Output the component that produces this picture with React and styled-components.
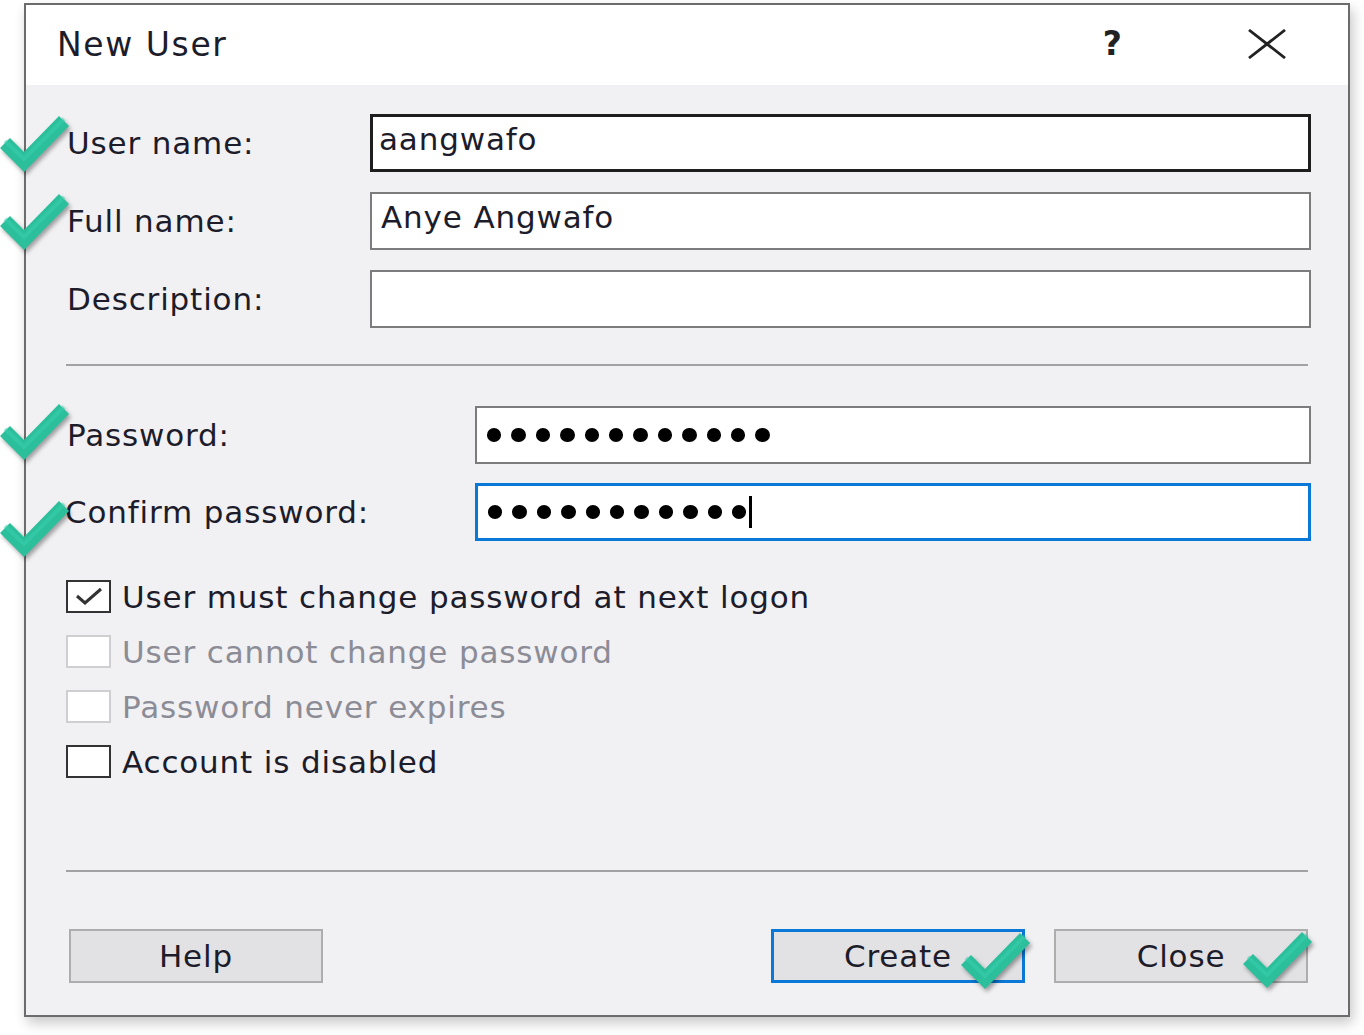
import React from "react";
import styled, { createGlobalStyle } from "styled-components";

const GlobalStyle = createGlobalStyle`
  html, body { margin: 0; padding: 0; background: #ffffff; }
  body { font-family: "DejaVu Sans", "Liberation Sans", sans-serif; }
  * { box-sizing: border-box; }
`;

const Page = styled.div`
  width: 1364px;
  height: 1035px;
  padding: 3px 0 0 24px;
  overflow: hidden;
`;

const Dialog = styled.div`
  position: relative;
  width: 1326px;
  border: 2px solid #6c6c6c;
  background: #f1f0f3;
  box-shadow: 3px 6px 12px rgba(0, 0, 0, 0.22);
  display: flex;
  flex-direction: column;
`;

const TitleBar = styled.div`
  height: 80px;
  background: #ffffff;
  display: flex;
  align-items: center;
  padding: 0 62px 0 31px;
`;

const Title = styled.div`
  flex: 1;
  font-size: 33px;
  letter-spacing: 1.6px;
  color: #1c1c2a;
  margin-top: -2px;
`;

const TitleButtons = styled.div`
  display: flex;
  align-items: center;
  gap: 126px;
  margin-top: -3px;
`;

const HelpGlyph = styled.span`
  font-size: 33px;
  font-weight: bold;
  color: #222;
  line-height: 1;
`;

const Body = styled.div`
  display: flex;
  flex-direction: column;
  padding: 29px 37px 32px 41px;
  font-size: 31px;
  letter-spacing: 0.85px;
  color: #1c1c2a;
`;

const FieldGroup = styled.div`
  display: flex;
  flex-direction: column;
  gap: ${(p) => p.$gap}px;
`;

const Row = styled.div`
  position: relative;
  display: flex;
  align-items: center;
  height: 58px;
`;

const Label = styled.div`
  width: ${(p) => p.$width}px;
  flex-shrink: 0;
  white-space: nowrap;
  margin-left: ${(p) => p.$shift || 0}px;
`;

const Input = styled.div`
  flex: 1;
  height: 58px;
  background: #ffffff;
  border: ${(p) => (p.$state === "active" ? "3px solid #1e1e1e" : p.$state === "focus" ? "3px solid #0a78d6" : "2px solid #7c7c7c")};
  display: flex;
  align-items: center;
  padding: 0 0 8px ${(p) => (p.$state === "active" ? 6 : 9)}px;
  white-space: nowrap;
`;

const DotInput = styled(Input)`
  padding: 0 0 0 10px;
  gap: 10px;
`;

const Dot = styled.span`
  width: 14.4px;
  height: 14px;
  border-radius: 50%;
  background: #000;
  flex-shrink: 0;
`;

const Caret = styled.span`
  width: 3px;
  height: 32px;
  background: #000;
  margin-left: -7px;
`;

const Separator = styled.div`
  height: 2px;
  background: #a2a2a2;
  margin: ${(p) => p.$top}px 3px ${(p) => p.$bottom}px -1px;
`;

const CheckList = styled.div`
  display: flex;
  flex-direction: column;
  margin-top: 28px;
`;

const CheckRow = styled.div`
  height: 55px;
  display: flex;
  align-items: center;
  gap: 11px;
  margin-left: -1px;
  color: ${(p) => (p.$disabled ? "#8c8c96" : "#1c1c2a")};
`;

const Box = styled.span`
  width: 45px;
  height: 33px;
  background: #ffffff;
  border: 2px solid ${(p) => (p.$disabled ? "#cfcfd2" : "#333333")};
  display: flex;
  align-items: center;
  justify-content: center;
  flex-shrink: 0;
`;

const ButtonBar = styled.div`
  display: flex;
  align-items: center;
  margin-left: 2px;
  margin-right: 3px;
`;

const Spacer = styled.div`
  flex: 1;
`;

const Button = styled.div`
  position: relative;
  width: 254px;
  height: 54px;
  background: #e2e1e4;
  border: ${(p) => (p.$primary ? "3px solid #0a78d6" : "2px solid #adadad")};
  display: flex;
  align-items: center;
  justify-content: center;
  margin-left: ${(p) => p.$ml || 0}px;
  color: #1c1c2a;
`;

const Mark = styled.svg`
  position: absolute;
  left: ${(p) => p.$left}px;
  top: ${(p) => p.$top}px;
  width: 74px;
  height: 62px;
  filter: drop-shadow(2px 3px 2px rgba(0, 0, 0, 0.35));
  pointer-events: none;
`;

function GreenCheck({ left, top }) {
  return (
    <Mark $left={left} $top={top} viewBox="0 0 74 62">
      <polyline
        points="6,31 25,50 65,9"
        fill="none"
        stroke="#2bbf9c"
        strokeWidth="14"
        strokeLinejoin="miter"
        strokeLinecap="butt"
      />
      <polyline
        points="6,29 25,47 65,7"
        fill="none"
        stroke="#3bd1ad"
        strokeWidth="4"
        strokeLinejoin="miter"
        opacity="0.5"
      />
    </Mark>
  );
}

function Dots({ n }) {
  return Array.from({ length: n }).map((_, i) => <Dot key={i} />);
}

export default function App() {
  return (
    <>
      <GlobalStyle />
      <Page>
        <Dialog>
          <TitleBar>
            <Title>New User</Title>
            <TitleButtons>
              <HelpGlyph>?</HelpGlyph>
              <svg width="38" height="30" viewBox="0 0 38 30">
                <path d="M1 1 L37 29 M37 1 L1 29" stroke="#222" strokeWidth="2.8" fill="none" />
              </svg>
            </TitleButtons>
          </TitleBar>
          <Body>
            <FieldGroup $gap={20}>
              <Row>
                <GreenCheck left={-68} top={-2} />
                <Label $width={303}>User name:</Label>
                <Input $state="active">aangwafo</Input>
              </Row>
              <Row>
                <GreenCheck left={-68} top={-2} />
                <Label $width={303}>Full name:</Label>
                <Input>Anye Angwafo</Input>
              </Row>
              <Row>
                <Label $width={303}>Description:</Label>
                <Input />
              </Row>
            </FieldGroup>
            <Separator $top={36} $bottom={40} />
            <FieldGroup $gap={19}>
              <Row>
                <GreenCheck left={-68} top={-6} />
                <Label $width={408}>Password:</Label>
                <DotInput>
                  <Dots n={12} />
                </DotInput>
              </Row>
              <Row>
                <GreenCheck left={-68} top={14} />
                <Label $width={410} $shift={-2}>Confirm password:</Label>
                <DotInput $state="focus">
                  <Dots n={11} />
                  <Caret />
                </DotInput>
              </Row>
            </FieldGroup>
            <CheckList>
              <CheckRow>
                <Box>
                  <svg width="32" height="22" viewBox="0 0 32 22">
                    <path d="M4 10 L12 17 L28 3" stroke="#333" strokeWidth="3" fill="none" />
                  </svg>
                </Box>
                User must change password at next logon
              </CheckRow>
              <CheckRow $disabled>
                <Box $disabled />
                User cannot change password
              </CheckRow>
              <CheckRow $disabled>
                <Box $disabled />
                Password never expires
              </CheckRow>
              <CheckRow>
                <Box />
                Account is disabled
              </CheckRow>
            </CheckList>
            <Separator $top={81} $bottom={57} />
            <ButtonBar>
              <Button>Help</Button>
              <Spacer />
              <Button $primary>
                Create
                <GreenCheck left={186} top={-3} />
              </Button>
              <Button $ml={29}>
                Close
                <GreenCheck left={186} top={-3} />
              </Button>
            </ButtonBar>
          </Body>
        </Dialog>
      </Page>
    </>
  );
}
